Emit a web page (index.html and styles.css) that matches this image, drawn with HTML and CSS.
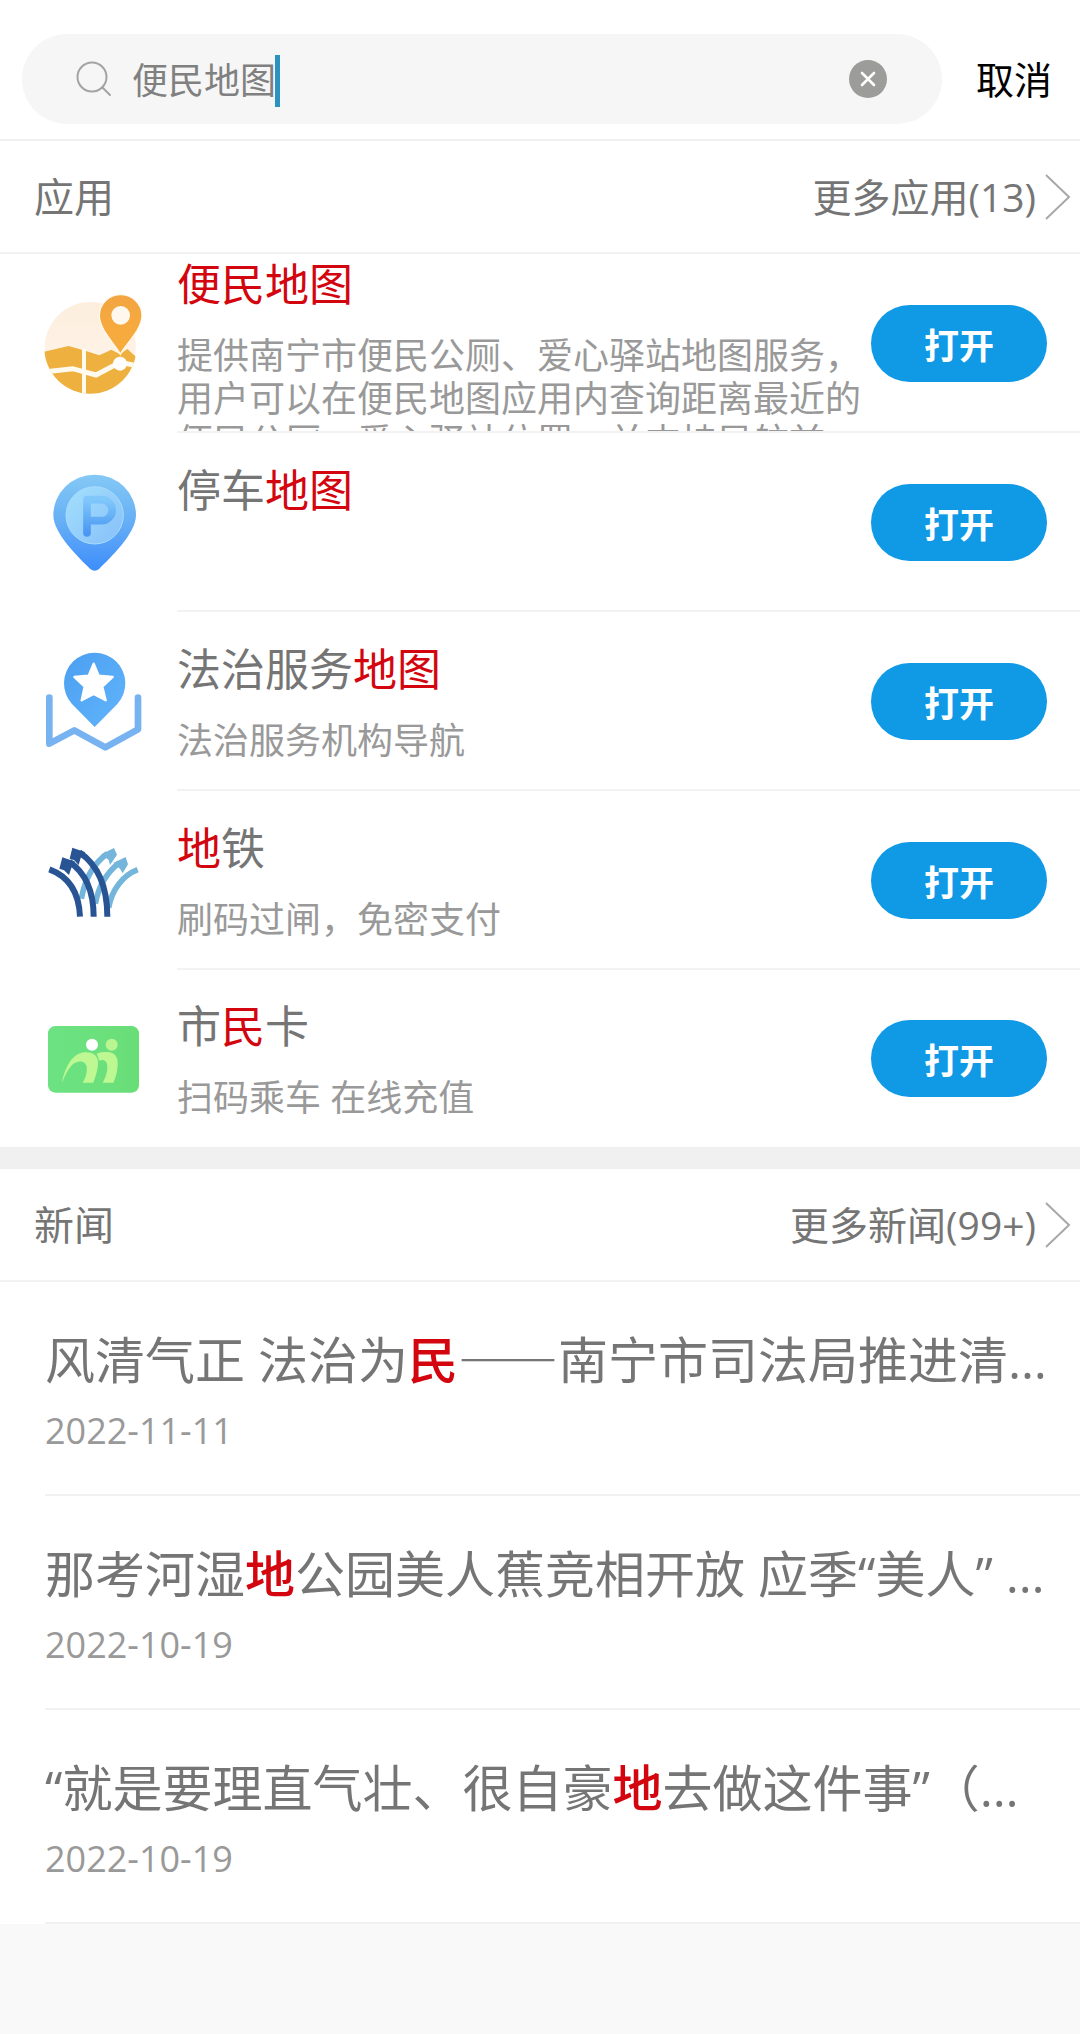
FILE: index.html
```html
<!DOCTYPE html>
<html lang="zh-CN">
<head>
  <meta charset="UTF-8">
  <meta name="viewport" content="width=device-width, initial-scale=1.0">
  <title>搜索</title>
  <link rel="stylesheet" href="styles.css">
</head>
<body>
  <form class="search-bar">
    <div class="search-box">
      <svg class="search-icon" viewBox="0 0 36 36" aria-hidden="true">
        <circle cx="16" cy="16" r="14.5" />
        <path d="M26.5 26.5L34 34" />
      </svg>
      <input type="text" class="search-input" name="keyword" value="便民地图" aria-label="搜索">
      <span class="caret"></span>
      <button type="reset" class="clear-btn" aria-label="清除">
        <svg viewBox="0 0 38 38">
          <circle cx="19" cy="19" r="19" fill="#9c9c9a" />
          <path d="M13 13L25 25M25 13L13 25" stroke="#fff" stroke-width="2.6" stroke-linecap="round" />
        </svg>
      </button>
    </div>
    <button type="button" class="cancel-btn">取消</button>
  </form>

  <section class="apps">
    <div class="section-header">
      <h2>应用</h2>
      <a href="#" class="more">更多应用(13)<svg class="chevron" viewBox="0 0 28 46"><path d="M2 1L25 23L2 45" /></svg></a>
    </div>
    <ul class="app-list">
      <li class="app-item">
        <svg class="app-icon" viewBox="0 -4 390 390" aria-hidden="true">
          <defs>
            <linearGradient id="sky" x1="0" y1="0" x2="0" y2="1">
              <stop offset="0" stop-color="#fdeedd" />
              <stop offset="1" stop-color="#fff6ee" />
            </linearGradient>
            <linearGradient id="orange" x1="0" y1="0" x2="0" y2="1">
              <stop offset="0" stop-color="#f2a541" />
              <stop offset="1" stop-color="#f8ad3c" />
            </linearGradient>
            <clipPath id="globe"><circle cx="181" cy="202" r="138" /></clipPath>
          </defs>
          <circle cx="181" cy="202" r="137" fill="url(#sky)" />
          <g clip-path="url(#globe)">
            <path d="M40 215L116 197L168 212L208 225L244 208L270 222L292 206L330 240V350H40Z" fill="#eeb03e" />
            <path d="M40 275L68 272L128 265L198 284L270 246L330 258" fill="none" stroke="#fffaf0" stroke-width="15" />
            <path d="M162 205V345" stroke="#fffaf0" stroke-width="12" />
          </g>
          <path d="M271 222C258 194 208 150 208 105a64 62 0 0 1 128 0C336 150 284 194 271 222Z" fill="url(#orange)" stroke="#fffaf0" stroke-width="4" />
          <circle cx="272" cy="105" r="28" fill="#fff8ee" />
          <circle cx="270" cy="250" r="21" fill="#fff" />
        </svg>
        <div class="app-info">
          <h3><em>便民地图</em></h3>
          <p>提供南宁市便民公厕、爱心驿站地图服务，用户可以在便民地图应用内查询距离最近的便民公厕、爱心驿站位置，并支持导航前往。</p>
        </div>
        <button type="button" class="open-btn">打开</button>
      </li>
      <li class="app-item">
        <svg class="app-icon" viewBox="0 -7 390 390" aria-hidden="true">
          <defs>
            <linearGradient id="parkPin" x1="0" y1="0" x2="0" y2="1">
              <stop offset="0" stop-color="#84c9f5" />
              <stop offset="0.5" stop-color="#66aef6" />
              <stop offset="1" stop-color="#3d8dfb" />
            </linearGradient>
            <linearGradient id="parkDisc" x1="0" y1="0" x2="1" y2="1">
              <stop offset="0" stop-color="#a4e0fc" />
              <stop offset="1" stop-color="#86bffa" />
            </linearGradient>
            <linearGradient id="parkSign" x1="0" y1="0" x2="0" y2="1">
              <stop offset="0" stop-color="#80c8fa" />
              <stop offset="1" stop-color="#4b97f2" />
            </linearGradient>
          </defs>
          <path d="M180 325C150 296 70 220 70 165a124 122 0 0 1 248 0C318 220 238 296 208 325Q194 337 180 325Z" fill="url(#parkPin)" />
          <circle cx="194" cy="165" r="86" fill="url(#parkDisc)" stroke="#a9dbfd" stroke-width="3" />
          <path d="M171 218V118H215a26 26 0 0 1 0 63H171" fill="none" stroke="url(#parkSign)" stroke-width="23" stroke-linecap="round" stroke-linejoin="round" />
        </svg>
        <div class="app-info">
          <h3>停车<em>地图</em></h3>
          <p></p>
        </div>
        <button type="button" class="open-btn">打开</button>
      </li>
      <li class="app-item">
        <svg class="app-icon" viewBox="0 -8 390 390" aria-hidden="true">
          <defs>
            <linearGradient id="lawPin" x1="0" y1="0" x2="1" y2="1">
              <stop offset="0" stop-color="#4a9ff0" />
              <stop offset="1" stop-color="#62b4fb" />
            </linearGradient>
          </defs>
          <path d="M58 174V312L133 272L226 323L324 269V174" fill="none" stroke="#78b3f1" stroke-width="20" stroke-linecap="round" stroke-linejoin="round" />
          <path d="M194 262L126 193A92 92 0 1 1 262 193Z" fill="url(#lawPin)" />
          <path d="M191 72L206 108L248 112L217 141L227 182L191 163L155 182L164 141L133 112L176 108Z" fill="#fff" stroke="#fff" stroke-width="7" stroke-linejoin="round" />
        </svg>
        <div class="app-info">
          <h3>法治服务<em>地图</em></h3>
          <p>法治服务机构导航</p>
        </div>
        <button type="button" class="open-btn">打开</button>
      </li>
      <li class="app-item">
        <svg class="app-icon" viewBox="0 -13 390 390" aria-hidden="true">
          <g fill="none" stroke="#74b5db" stroke-width="17">
            <path d="M154 235C165 175 190 130 232 100" />
            <path d="M196 250C205 200 232 155 268 127" />
            <path d="M236 262C246 205 280 165 323 148" />
          </g>
          <path d="M214 102L252 83L261 103L240 134L236 119ZM250 128L287 110L294 132L278 159L270 145Z" fill="#74b5db" />
          <g fill="none" stroke="#285493" stroke-width="18">
            <path d="M58 147C110 166 147 210 150 289" />
            <path d="M118 124C168 158 191 215 191 289" />
            <path d="M148 96C205 135 232 200 232 289" />
          </g>
          <path d="M97 111L136 124L124 143L117 164L102 150L88 145ZM127 82L166 96L152 113L146 134L133 120L119 115Z" fill="#285493" />
        </svg>
        <div class="app-info">
          <h3><em>地</em>铁</h3>
          <p>刷码过闸，免密支付</p>
        </div>
        <button type="button" class="open-btn">打开</button>
      </li>
      <li class="app-item">
        <svg class="app-icon" viewBox="0 -19 390 390" aria-hidden="true">
          <defs>
            <linearGradient id="card" x1="0" y1="0" x2="1" y2="0">
              <stop offset="0" stop-color="#6de283" />
              <stop offset="1" stop-color="#69de77" />
            </linearGradient>
          </defs>
          <rect x="54" y="77" width="273" height="200" rx="22" fill="url(#card)" />
          <circle cx="186" cy="133" r="18" fill="#fff" />
          <circle cx="245" cy="133" r="18" fill="#b9f691" />
          <path d="M96 247C104 205 125 158 165 156C192 155 205 168 204 190C203 212 194 235 190 247H158C168 230 172 214 170 199C167 180 141 178 126 194C112 209 104 228 96 247Z" fill="#bdf893" />
          <path d="M200 160C208 155 222 155 232 155C254 155 263 170 263 188C263 214 256 234 250 247H218C228 230 233 213 232 198C231 182 222 176 208 181Z" fill="#bdf893" />
        </svg>
        <div class="app-info">
          <h3>市<em>民</em>卡</h3>
          <p>扫码乘车 在线充值</p>
        </div>
        <button type="button" class="open-btn">打开</button>
      </li>
    </ul>
  </section>

  <section class="news">
    <div class="section-header">
      <h2>新闻</h2>
      <a href="#" class="more">更多新闻(99+)<svg class="chevron" viewBox="0 0 28 46"><path d="M2 1L25 23L2 45" /></svg></a>
    </div>
    <ul class="news-list">
      <li class="news-item">
        <h3>风清气正 法治为<em>民</em><span class="dash">——</span>南宁市司法局推进清…</h3>
        <time datetime="2022-11-11">2022-11-11</time>
      </li>
      <li class="news-item">
        <h3>那考河湿<em>地</em>公园美人蕉竞相开放 应季“美人” …</h3>
        <time datetime="2022-10-19">2022-10-19</time>
      </li>
      <li class="news-item">
        <h3>“就是要理直气壮、很自豪<em>地</em>去做这件事”（…</h3>
        <time datetime="2022-10-19">2022-10-19</time>
      </li>
    </ul>
  </section>
</body>
</html>
```
FILE: styles.css
```css
* {
  box-sizing: border-box;
}
body {
  margin: 0;
  font-family: "Open Sans", "Noto Sans CJK SC", sans-serif;
  color: #757575;
  background-color: #f9f9f9;
  text-spacing-trim: space-all;
}
h2, h3, p, ul {
  margin: 0;
  padding: 0;
  font-weight: normal;
}
ul {
  list-style: none;
}
button {
  padding: 0;
  border: none;
  background: none;
  font-family: inherit;
  cursor: pointer;
}
em {
  font-style: normal;
  color: #d3060f;
}

/* search bar */
.search-bar {
  display: flex;
  align-items: center;
  gap: 34px;
  padding: 34px 28px 15px 22px;
  background-color: #fff;
  border-bottom: 2px solid #efefef;
}
.search-box {
  display: flex;
  align-items: center;
  flex: 1;
  min-width: 0;
  height: 90px;
  padding: 0 55px 0 54px;
  border-radius: 45px;
  background-color: #f6f6f6;
}
.search-icon {
  width: 36px;
  height: 36px;
  margin-right: 20px;
  fill: none;
  stroke: #a3a3a3;
  stroke-width: 2;
  stroke-linecap: round;
}
.search-input {
  field-sizing: content;
  margin-top: 4px;
  padding: 0;
  border: none;
  outline: none;
  background: none;
  font-family: inherit;
  font-size: 36px;
  line-height: 52px;
  color: #808080;
}
.caret {
  width: 5px;
  height: 52px;
  margin-top: 4px;
  margin-left: -1px;
  background-color: #2c93be;
}
.clear-btn {
  width: 38px;
  height: 38px;
  margin-left: auto;
}
.clear-btn svg {
  display: block;
}
.cancel-btn {
  font-size: 38px;
  line-height: 52px;
  color: #000;
}

/* section title row */
.section-header {
  display: flex;
  align-items: center;
  justify-content: space-between;
  height: 113px;
  padding: 0 8px 0 34px;
  border-bottom: 2px solid #f2f2f2;
}
.section-header h2 {
  font-size: 40px;
  line-height: 56px;
}
.more {
  display: flex;
  align-items: center;
  gap: 8px;
  font-size: 39px;
  line-height: 56px;
  color: #757575;
  text-decoration: none;
}
.chevron {
  width: 28px;
  height: 46px;
  fill: none;
  stroke: #a8a8a8;
  stroke-width: 2;
}

/* apps */
.apps {
  background-color: #fff;
  border-bottom: 22px solid #f0f0f0;
}
.app-item {
  display: flex;
  align-items: center;
  height: 179px;
  padding: 2px 0 2px 30px;
  background: linear-gradient(#f2f2f2, #f2f2f2) 177px 100% / 100% 2px no-repeat;
}
.app-item:last-child {
  height: 177px;
  background: none;
}
.app-icon {
  flex: none;
  width: 130px;
  height: 130px;
  margin-right: 17px;
}
.app-info {
  display: flex;
  flex-direction: column;
  justify-content: center;
  gap: 22px;
  flex: 1;
  min-width: 0;
  height: 100%;
  overflow: hidden;
}
.app-info h3 {
  font-size: 44px;
  line-height: 56px;
}
/* long descriptions run on and are cut at the row's edge */
.app-info p {
  min-height: 43px;
  max-height: 97px;
  font-size: 36px;
  line-height: 43px;
  color: #999;
}
.open-btn {
  flex: none;
  width: 176px;
  height: 77px;
  margin: 0 33px 0 6px;
  border-radius: 39px;
  background-color: #109ae6;
  font-size: 35px;
  font-weight: bold;
  color: #fff;
}

/* news */
.news {
  background-color: #fff;
}
.news-item {
  margin-left: 45px;
  padding: 44px 0 39px;
  border-bottom: 2px solid #f1f1f1;
}
.news-item h3 {
  margin-bottom: 13px;
  overflow: hidden;
  font-size: 50px;
  line-height: 68px;
  white-space: nowrap;
}
.news-item em {
  font-weight: 500;
}
.news-item .dash {
  font-family: "Noto Sans CJK SC", sans-serif;
  font-weight: 500;
  line-height: 1;
}
.news-item time {
  display: block;
  font-size: 36px;
  line-height: 48px;
  color: #999;
}
```
